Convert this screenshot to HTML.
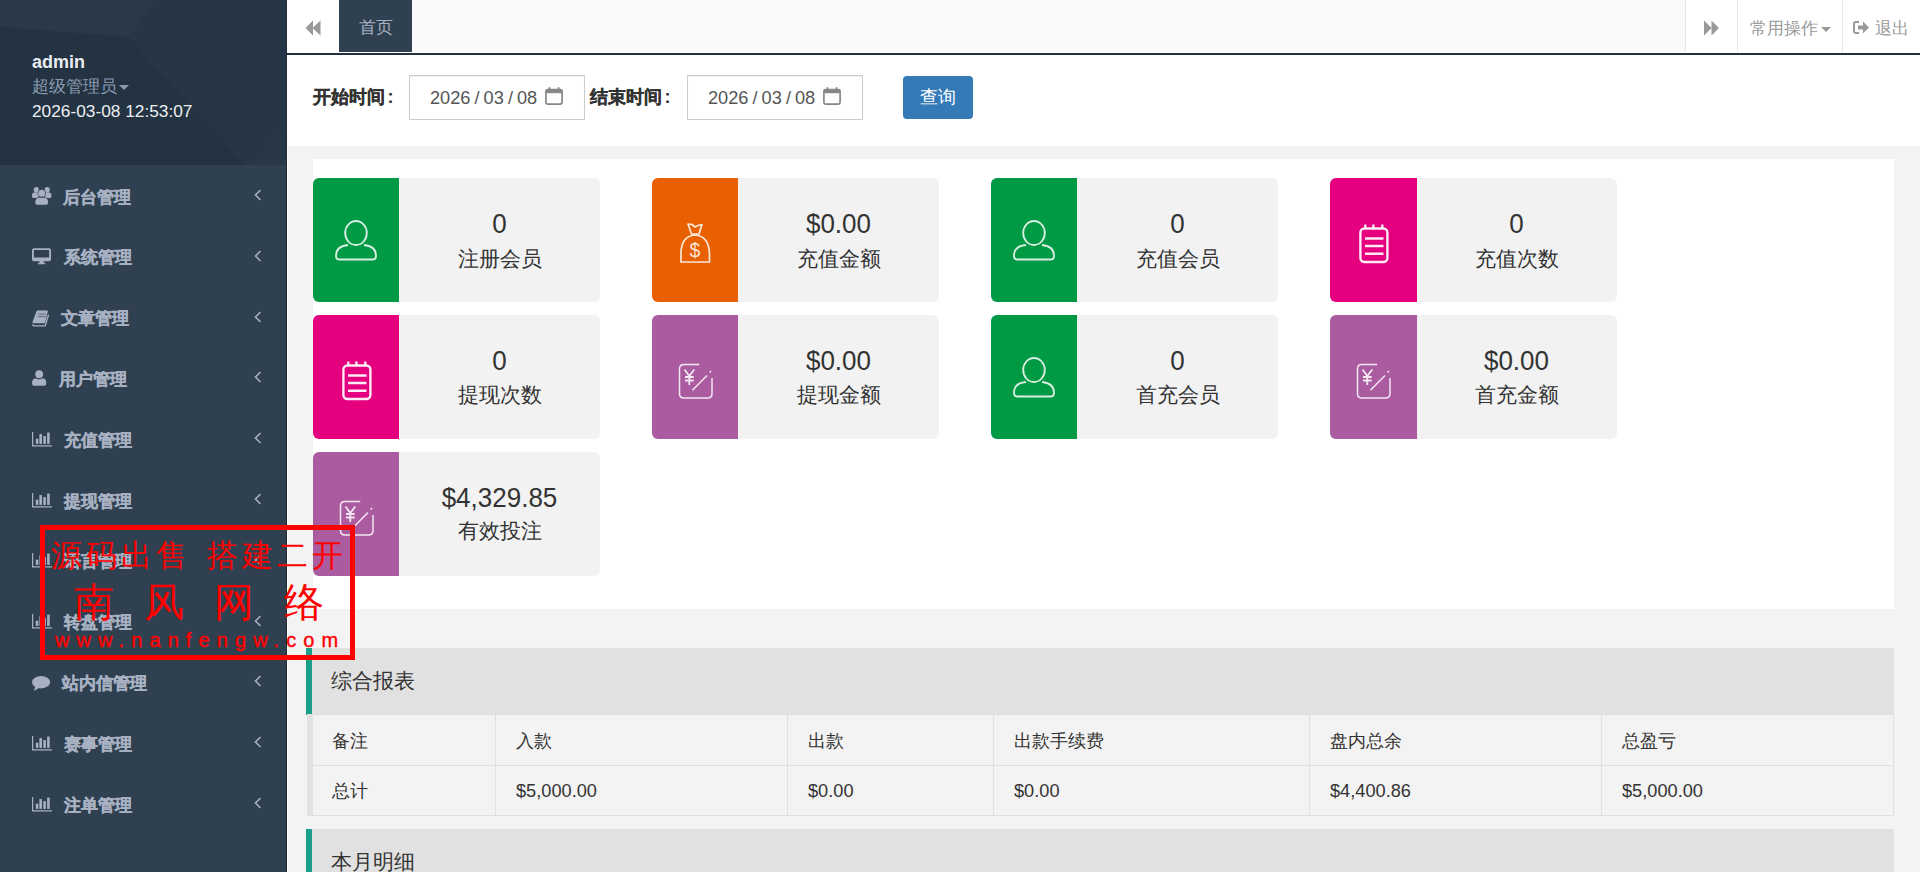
<!DOCTYPE html>
<html><head><meta charset="utf-8">
<style>
*{box-sizing:border-box;margin:0;padding:0}
html,body{width:1920px;height:872px;overflow:hidden;background:#f3f3f3;font-family:"Liberation Sans",sans-serif;color:#333}
.abs{position:absolute}
#side{position:absolute;left:0;top:0;width:287px;height:872px;background:#2f4050;border-right:1px solid #1f2d3b}
#shead{position:absolute;left:0;top:0;width:286px;height:165px;background:#273646;overflow:hidden}
.mi{position:absolute;left:0;width:286px;height:61px;color:#a7b1c2;font-size:17px;font-weight:bold;-webkit-text-stroke:0.3px #a7b1c2}
.mi .t{position:absolute;top:1.5px;line-height:61px;white-space:nowrap}
.mi .ic{position:absolute;left:32px;line-height:0}
.mi .ch{position:absolute;left:254px;top:24px}
#whitecol{position:absolute;left:287px;top:0;width:1px;height:872px;background:#fff}
#tabs{position:absolute;left:288px;top:0;width:1632px;height:52px;background:#fafafa}
#tabline{position:absolute;left:287px;top:53px;width:1633px;height:2px;background:#22303f}
#filter{position:absolute;left:288px;top:52px;width:1632px;height:94px;background:#fff}
.lbl{position:absolute;top:85px;font-size:18.2px;font-weight:bold;color:#333;-webkit-text-stroke:0.3px #333;line-height:24px;white-space:nowrap}
.inp{position:absolute;top:75px;width:176px;height:45px;border:1px solid #ccc;background:#fff;box-shadow:inset 0 1px 1px rgba(0,0,0,.075)}
.inp .d{position:absolute;left:20px;top:10px;font-size:18.2px;color:#555;line-height:24px;white-space:nowrap;word-spacing:-1px}
.inp svg{position:absolute;left:135px;top:11px}
#btn{position:absolute;left:903px;top:76px;width:70px;height:43px;background:#337ab7;border-radius:4px;color:#fff;font-size:18.2px;text-align:center;line-height:43px}
#panel{position:absolute;left:313px;top:159px;width:1581px;height:450px;background:#fff}
.card{position:absolute;width:287px;height:124px;background:#f2f2f2;border-radius:6px;overflow:hidden}
.card .blk{position:absolute;left:0;top:0;width:86px;height:124px;line-height:0}
.card .num{position:absolute;left:86px;width:201px;top:31px;text-align:center;font-size:26px;line-height:30px;color:#333;white-space:nowrap;transform:scaleY(1.05);transform-origin:50% 70%}
.card .nm{position:absolute;left:86px;width:201px;top:65px;text-align:center;font-size:20.8px;line-height:30px;color:#333;white-space:nowrap}
.sec{position:absolute;left:306px;width:1588px;height:66.5px;background:#e1e1e1;border-left:6px solid #1a9f8b}
.sec span{position:absolute;left:19px;top:0;line-height:66px;font-size:20.8px;color:#333;white-space:nowrap}
#tblb{position:absolute;left:307px;top:714px;width:6px;height:102px;background:#e1e1e1}
#tbl{position:absolute;left:312px;top:714px;width:1582px;height:102px;border-right:1px solid #e0e0e0}
.rowl{position:absolute;left:313px;width:1581px;height:1px;background:#e0e0e0}
.cell{position:absolute;height:51px;line-height:53px;font-size:18.2px;color:#333;padding-left:21px;border-right:1px solid #e0e0e0;white-space:nowrap}
.tb{position:absolute;top:3px;height:52px;color:#999;font-size:17px;line-height:52px;text-align:center;white-space:nowrap}
</style></head><body>
<div id="side">
 <div id="shead">
  <svg class="abs" style="left:0;top:0" width="286" height="165">
   <polygon points="0,0 156,0 128,37 0,27" fill="#2a3949"/>
   <polygon points="0,27 128,37 245,165 0,165" fill="#243342"/>
   <polygon points="250,165 286,128 286,165" fill="#293848"/>
  </svg>
  <div class="abs" style="left:32px;top:50px;font-size:18px;font-weight:bold;color:#e9ecf0;line-height:24px">admin</div>
  <div class="abs" style="left:32px;top:75px;font-size:17px;color:#8a9bb0;line-height:24px;white-space:nowrap">超级管理员<span style="display:inline-block;width:0;height:0;border-left:5px solid transparent;border-right:5px solid transparent;border-top:5px solid #8a9bb0;vertical-align:middle;margin-left:2px"></span></div>
  <div class="abs" style="left:32px;top:99px;font-size:17.3px;color:#eceff2;line-height:24px;white-space:nowrap">2026-03-08 12:53:07</div>
 </div>
<div class="mi" style="top:165.0px"><div class="ic" style="top:22.0px"><svg width="20" height="18" viewBox="0 0 20 18"><circle cx="4.3" cy="2.7" r="2.6" fill="#a7b1c2"/><circle cx="15.2" cy="2.7" r="2.6" fill="#a7b1c2"/><path d="M0 8.3 Q0 5.3 3.2 5.3 L5.6 5.3 Q7 5.3 7 7 L7 10.3 Q7 11 6 11 L1.3 11 Q0 11 0 9.8Z" fill="#a7b1c2"/><path d="M19.4 8.3 Q19.4 5.3 16.2 5.3 L13.8 5.3 Q12.4 5.3 12.4 7 L12.4 10.3 Q12.4 11 13.4 11 L18.1 11 Q19.4 11 19.4 9.8Z" fill="#a7b1c2" /><circle cx="9.7" cy="6.3" r="4.1" fill="#2f4050"/><circle cx="9.7" cy="6.3" r="3.5" fill="#a7b1c2"/><path d="M2.6 16 Q2.6 10 7 10 L12.4 10 Q16.8 10 16.8 16 Q16.8 18 14.8 18 L4.6 18 Q2.6 18 2.6 16Z" fill="#2f4050"/><path d="M3.3 15.8 Q3.3 10.7 7.2 10.7 L12.2 10.7 Q16.1 10.7 16.1 15.8 Q16.1 17.8 14.3 17.8 L5.1 17.8 Q3.3 17.8 3.3 15.8Z" fill="#a7b1c2"/></svg></div><div class="t" style="left:63px">后台管理</div><svg class="ch" width="8" height="12" viewBox="0 0 8 12"><path d="M6.5 1 L1.5 6 L6.5 11" fill="none" stroke="#a7b1c2" stroke-width="1.6"/></svg></div>
<div class="mi" style="top:225.8px"><div class="ic" style="top:22.4px"><svg width="20" height="17" viewBox="0 0 20 17"><path d="M2 0.2 L17 0.2 Q19 0.2 19 2.2 L19 11.2 Q19 13.2 17 13.2 L2 13.2 Q0 13.2 0 11.2 L0 2.2 Q0 0.2 2 0.2Z M1.9 1.9 L1.9 9.4 L17.1 9.4 L17.1 1.9Z" fill="#a7b1c2" fill-rule="evenodd"/><rect x="7.6" y="13" width="4" height="2.2" fill="#a7b1c2"/><rect x="6" y="14.8" width="7.2" height="1.4" rx="0.5" fill="#a7b1c2"/></svg></div><div class="t" style="left:64px">系统管理</div><svg class="ch" width="8" height="12" viewBox="0 0 8 12"><path d="M6.5 1 L1.5 6 L6.5 11" fill="none" stroke="#a7b1c2" stroke-width="1.6"/></svg></div>
<div class="mi" style="top:286.6px"><div class="ic" style="top:23.7px"><svg width="18" height="17" viewBox="0 0 18 17"><path d="M4.5 1.3 Q4.8 0.4 5.8 0.4 L15 0.4 Q16.2 0.4 15.8 1.6 L13 13.2 L1.6 13.2 Q0.2 13.2 0.5 12 Z" fill="#a7b1c2"/><path d="M16.6 4.8 L13.2 15.8 L2.2 15.8 Q0.6 15.8 0.6 14.2" fill="none" stroke="#a7b1c2" stroke-width="1.3"/><path d="M6.3 4.1 L14.2 4.1 M5.8 6.6 L13.6 6.6" stroke="#2f4050" stroke-width="0.9" opacity="0.7"/></svg></div><div class="t" style="left:61px">文章管理</div><svg class="ch" width="8" height="12" viewBox="0 0 8 12"><path d="M6.5 1 L1.5 6 L6.5 11" fill="none" stroke="#a7b1c2" stroke-width="1.6"/></svg></div>
<div class="mi" style="top:347.4px"><div class="ic" style="top:22.8px"><svg width="15" height="16" viewBox="0 0 15 16"><circle cx="7.2" cy="4.2" r="3.9" fill="#a7b1c2"/><path d="M0 13.3 Q0 8.8 3.5 8.3 Q7.2 10.2 10.9 8.3 Q14.3 8.8 14.3 13.3 Q14.3 15.8 12 15.8 L2.3 15.8 Q0 15.8 0 13.3Z" fill="#a7b1c2"/></svg></div><div class="t" style="left:59px">用户管理</div><svg class="ch" width="8" height="12" viewBox="0 0 8 12"><path d="M6.5 1 L1.5 6 L6.5 11" fill="none" stroke="#a7b1c2" stroke-width="1.6"/></svg></div>
<div class="mi" style="top:408.2px"><div class="ic" style="top:23.7px"><svg width="21" height="15" viewBox="0 0 21 15"><path d="M0.6 0 L0.6 13.9 L20 13.9" fill="none" stroke="#a7b1c2" stroke-width="1.25"/><rect x="3.8" y="6.7" width="2.6" height="5.2" fill="#a7b1c2"/><rect x="7.4" y="2.1" width="2.6" height="9.8" fill="#a7b1c2"/><rect x="11.3" y="4.1" width="2.6" height="7.8" fill="#a7b1c2"/><rect x="15.1" y="0.6" width="2.6" height="11.3" fill="#a7b1c2"/></svg></div><div class="t" style="left:64px">充值管理</div><svg class="ch" width="8" height="12" viewBox="0 0 8 12"><path d="M6.5 1 L1.5 6 L6.5 11" fill="none" stroke="#a7b1c2" stroke-width="1.6"/></svg></div>
<div class="mi" style="top:469.0px"><div class="ic" style="top:23.7px"><svg width="21" height="15" viewBox="0 0 21 15"><path d="M0.6 0 L0.6 13.9 L20 13.9" fill="none" stroke="#a7b1c2" stroke-width="1.25"/><rect x="3.8" y="6.7" width="2.6" height="5.2" fill="#a7b1c2"/><rect x="7.4" y="2.1" width="2.6" height="9.8" fill="#a7b1c2"/><rect x="11.3" y="4.1" width="2.6" height="7.8" fill="#a7b1c2"/><rect x="15.1" y="0.6" width="2.6" height="11.3" fill="#a7b1c2"/></svg></div><div class="t" style="left:64px">提现管理</div><svg class="ch" width="8" height="12" viewBox="0 0 8 12"><path d="M6.5 1 L1.5 6 L6.5 11" fill="none" stroke="#a7b1c2" stroke-width="1.6"/></svg></div>
<div class="mi" style="top:529.8px"><div class="ic" style="top:23.7px"><svg width="21" height="15" viewBox="0 0 21 15"><path d="M0.6 0 L0.6 13.9 L20 13.9" fill="none" stroke="#a7b1c2" stroke-width="1.25"/><rect x="3.8" y="6.7" width="2.6" height="5.2" fill="#a7b1c2"/><rect x="7.4" y="2.1" width="2.6" height="9.8" fill="#a7b1c2"/><rect x="11.3" y="4.1" width="2.6" height="7.8" fill="#a7b1c2"/><rect x="15.1" y="0.6" width="2.6" height="11.3" fill="#a7b1c2"/></svg></div><div class="t" style="left:64px">语言管理</div><svg class="ch" width="8" height="12" viewBox="0 0 8 12"><path d="M6.5 1 L1.5 6 L6.5 11" fill="none" stroke="#a7b1c2" stroke-width="1.6"/></svg></div>
<div class="mi" style="top:590.6px"><div class="ic" style="top:23.7px"><svg width="21" height="15" viewBox="0 0 21 15"><path d="M0.6 0 L0.6 13.9 L20 13.9" fill="none" stroke="#a7b1c2" stroke-width="1.25"/><rect x="3.8" y="6.7" width="2.6" height="5.2" fill="#a7b1c2"/><rect x="7.4" y="2.1" width="2.6" height="9.8" fill="#a7b1c2"/><rect x="11.3" y="4.1" width="2.6" height="7.8" fill="#a7b1c2"/><rect x="15.1" y="0.6" width="2.6" height="11.3" fill="#a7b1c2"/></svg></div><div class="t" style="left:64px">转盘管理</div><svg class="ch" width="8" height="12" viewBox="0 0 8 12"><path d="M6.5 1 L1.5 6 L6.5 11" fill="none" stroke="#a7b1c2" stroke-width="1.6"/></svg></div>
<div class="mi" style="top:651.4px"><div class="ic" style="top:24.2px"><svg width="19" height="16" viewBox="0 0 19 16"><ellipse cx="9.1" cy="6.2" rx="9" ry="6.2" fill="#a7b1c2"/><path d="M3.5 10 L1.8 15 L8 11.5Z" fill="#a7b1c2"/></svg></div><div class="t" style="left:62px">站内信管理</div><svg class="ch" width="8" height="12" viewBox="0 0 8 12"><path d="M6.5 1 L1.5 6 L6.5 11" fill="none" stroke="#a7b1c2" stroke-width="1.6"/></svg></div>
<div class="mi" style="top:712.2px"><div class="ic" style="top:23.7px"><svg width="21" height="15" viewBox="0 0 21 15"><path d="M0.6 0 L0.6 13.9 L20 13.9" fill="none" stroke="#a7b1c2" stroke-width="1.25"/><rect x="3.8" y="6.7" width="2.6" height="5.2" fill="#a7b1c2"/><rect x="7.4" y="2.1" width="2.6" height="9.8" fill="#a7b1c2"/><rect x="11.3" y="4.1" width="2.6" height="7.8" fill="#a7b1c2"/><rect x="15.1" y="0.6" width="2.6" height="11.3" fill="#a7b1c2"/></svg></div><div class="t" style="left:64px">赛事管理</div><svg class="ch" width="8" height="12" viewBox="0 0 8 12"><path d="M6.5 1 L1.5 6 L6.5 11" fill="none" stroke="#a7b1c2" stroke-width="1.6"/></svg></div>
<div class="mi" style="top:773.0px"><div class="ic" style="top:23.7px"><svg width="21" height="15" viewBox="0 0 21 15"><path d="M0.6 0 L0.6 13.9 L20 13.9" fill="none" stroke="#a7b1c2" stroke-width="1.25"/><rect x="3.8" y="6.7" width="2.6" height="5.2" fill="#a7b1c2"/><rect x="7.4" y="2.1" width="2.6" height="9.8" fill="#a7b1c2"/><rect x="11.3" y="4.1" width="2.6" height="7.8" fill="#a7b1c2"/><rect x="15.1" y="0.6" width="2.6" height="11.3" fill="#a7b1c2"/></svg></div><div class="t" style="left:64px">注单管理</div><svg class="ch" width="8" height="12" viewBox="0 0 8 12"><path d="M6.5 1 L1.5 6 L6.5 11" fill="none" stroke="#a7b1c2" stroke-width="1.6"/></svg></div>
</div>
<div id="whitecol"></div>
<div id="tabs"></div>
<div class="abs" style="left:288px;top:0;width:51px;height:52px;background:#fff"></div>
<svg class="abs" style="left:305px;top:20px" width="17" height="16" viewBox="0 0 17 16"><path d="M0.5 8 L8 0.5 L8 15.5Z M7.5 8 L15.5 0.5 L15.5 15.5Z" fill="#999"/></svg>
<div class="abs" style="left:339px;top:0;width:73px;height:52px;background:#2f4050;color:#a7b1c2;font-size:17px;line-height:55px;text-align:center">首页</div>
<div class="abs" style="left:1685px;top:0;width:235px;height:52px;background:#fff"></div>
<div class="abs" style="left:1685px;top:0;width:1px;height:52px;background:#e7e7e7"></div>
<div class="abs" style="left:1737px;top:0;width:1px;height:52px;background:#e7e7e7"></div>
<div class="abs" style="left:1842px;top:0;width:1px;height:52px;background:#e7e7e7"></div>
<svg class="abs" style="left:1703px;top:20px" width="17" height="16" viewBox="0 0 17 16"><path d="M1 0.5 L8.5 8 L1 15.5Z M8.5 0.5 L16 8 L8.5 15.5Z" fill="#999"/></svg>
<div class="tb" style="left:1738px;width:104px">常用操作<span style="display:inline-block;width:0;height:0;border-left:5px solid transparent;border-right:5px solid transparent;border-top:5px solid #999;vertical-align:middle;margin-left:3px"></span></div>
<svg class="abs" style="left:1853px;top:20px" width="17" height="15" viewBox="0 0 17 15"><path d="M6 2 L3 2 Q1 2 1 4 L1 11 Q1 13 3 13 L6 13" fill="none" stroke="#999" stroke-width="2"/><path d="M5 5.5 L10 5.5 L10 1.5 L16 7.5 L10 13.5 L10 9.5 L5 9.5Z" fill="#999"/></svg>
<div class="abs" style="left:1875px;top:3px;height:52px;color:#999;font-size:17px;line-height:52px">退出</div>
<div id="filter"></div>
<div id="tabline"></div>
<div class="lbl" style="left:313px">开始时间<span style="margin-left:2.5px;-webkit-text-stroke:0">:</span></div>
<div class="inp" style="left:409px"><div class="d">2026 / 03 / 08</div><svg width="18" height="18" viewBox="0 0 18 18"><rect x="0.9" y="2.6" width="16.2" height="14.5" rx="2" fill="none" stroke="#888" stroke-width="1.7"/><rect x="0.9" y="2.6" width="16.2" height="3.6" fill="#888"/><rect x="3.6" y="0.2" width="1.8" height="3" fill="#888"/><rect x="12.6" y="0.2" width="1.8" height="3" fill="#888"/></svg></div>
<div class="lbl" style="left:590px">结束时间<span style="margin-left:2.5px;-webkit-text-stroke:0">:</span></div>
<div class="inp" style="left:687px"><div class="d">2026 / 03 / 08</div><svg width="18" height="18" viewBox="0 0 18 18"><rect x="0.9" y="2.6" width="16.2" height="14.5" rx="2" fill="none" stroke="#888" stroke-width="1.7"/><rect x="0.9" y="2.6" width="16.2" height="3.6" fill="#888"/><rect x="3.6" y="0.2" width="1.8" height="3" fill="#888"/><rect x="12.6" y="0.2" width="1.8" height="3" fill="#888"/></svg></div>
<div id="btn">查询</div>
<div id="panel"></div>
<div class="card" style="left:313px;top:178px"><div class="blk" style="background:#009944;width:86px"><svg width="86" height="124" viewBox="0 0 86 124"><ellipse cx="43" cy="55" rx="10.8" ry="12" fill="none" stroke="rgba(255,255,255,.85)" stroke-width="1.8"/><path d="M35 67 Q23 68 23 78 Q23 81.5 26 81.5 L60 81.5 Q63 81.5 63 78 Q63 68 51 67" fill="none" stroke="rgba(255,255,255,.85)" stroke-width="1.8"/></svg></div><div class="num">0</div><div class="nm" style="top:66px">注册会员</div></div>
<div class="card" style="left:652px;top:178px"><div class="blk" style="background:#e96000;width:86px"><svg width="86" height="124" viewBox="0 0 86 124"><path d="M36 46 L39.5 56 L47 56 L50 46.5 L46 47.5 L43 49 L40 46.5 Z" fill="none" stroke="rgba(255,255,255,.85)" stroke-width="1.7" stroke-linejoin="round"/><path d="M29 84 L29 76 Q29 58 43 57 Q57 58 57.5 76 L57.5 84 Z" fill="none" stroke="rgba(255,255,255,.85)" stroke-width="1.7" stroke-linejoin="round"/><text x="43" y="78.5" text-anchor="middle" font-family="Liberation Sans" font-size="19.5" fill="rgba(255,255,255,.85)">$</text></svg></div><div class="num">$0.00</div><div class="nm" style="top:66px">充值金额</div></div>
<div class="card" style="left:991px;top:178px"><div class="blk" style="background:#009944;width:86px"><svg width="86" height="124" viewBox="0 0 86 124"><ellipse cx="43" cy="55" rx="10.8" ry="12" fill="none" stroke="rgba(255,255,255,.85)" stroke-width="1.8"/><path d="M35 67 Q23 68 23 78 Q23 81.5 26 81.5 L60 81.5 Q63 81.5 63 78 Q63 68 51 67" fill="none" stroke="rgba(255,255,255,.85)" stroke-width="1.8"/></svg></div><div class="num">0</div><div class="nm" style="top:66px">充值会员</div></div>
<div class="card" style="left:1330px;top:178px"><div class="blk" style="background:#e4007f;width:87px"><svg width="86" height="124" viewBox="0 0 86 124"><rect x="30.4" y="50.5" width="27" height="33.5" rx="4" fill="none" stroke="#fff" stroke-opacity=".92" stroke-width="2.4"/><path d="M35.3 46.5 L35.3 51 M43.4 46.5 L43.4 51 M52.3 46.5 L52.3 51" stroke="#fff" stroke-opacity=".92" stroke-width="2.3"/><path d="M35 60.5 L53.5 60.5 M35 68 L53.5 68 M35 75.7 L53.5 75.7" stroke="#fff" stroke-opacity=".92" stroke-width="2.4"/></svg></div><div class="num">0</div><div class="nm" style="top:66px">充值次数</div></div>
<div class="card" style="left:313px;top:315px"><div class="blk" style="background:#e4007f;width:86px"><svg width="86" height="124" viewBox="0 0 86 124"><rect x="30.4" y="50.5" width="27" height="33.5" rx="4" fill="none" stroke="#fff" stroke-opacity=".92" stroke-width="2.4"/><path d="M35.3 46.5 L35.3 51 M43.4 46.5 L43.4 51 M52.3 46.5 L52.3 51" stroke="#fff" stroke-opacity=".92" stroke-width="2.3"/><path d="M35 60.5 L53.5 60.5 M35 68 L53.5 68 M35 75.7 L53.5 75.7" stroke="#fff" stroke-opacity=".92" stroke-width="2.4"/></svg></div><div class="num">0</div><div class="nm" style="top:65px">提现次数</div></div>
<div class="card" style="left:652px;top:315px"><div class="blk" style="background:#ab5ca0;width:86px"><svg width="86" height="124" viewBox="0 0 86 124"><path d="M47.2 49.5 L32 49.5 Q27.5 49.5 27.5 54 L27.5 78.5 Q27.5 83 32 83 L55.5 83 Q60 83 60 78.5 L60 63" fill="none" stroke="rgba(255,255,255,.85)" stroke-width="1.5"/><circle cx="58.3" cy="56.7" r="1" fill="rgba(255,255,255,.85)"/><path d="M40.4 75.2 L55 60.5" stroke="rgba(255,255,255,.85)" stroke-width="1.5"/><path d="M32.5 54.5 L37.3 61 L42.3 54.5 M37.3 61 L37.3 70 M33 62 L41.7 62 M33 65.5 L41.7 65.5" fill="none" stroke="rgba(255,255,255,.85)" stroke-width="1.8"/></svg></div><div class="num">$0.00</div><div class="nm" style="top:65px">提现金额</div></div>
<div class="card" style="left:991px;top:315px"><div class="blk" style="background:#009944;width:86px"><svg width="86" height="124" viewBox="0 0 86 124"><ellipse cx="43" cy="55" rx="10.8" ry="12" fill="none" stroke="rgba(255,255,255,.85)" stroke-width="1.8"/><path d="M35 67 Q23 68 23 78 Q23 81.5 26 81.5 L60 81.5 Q63 81.5 63 78 Q63 68 51 67" fill="none" stroke="rgba(255,255,255,.85)" stroke-width="1.8"/></svg></div><div class="num">0</div><div class="nm" style="top:65px">首充会员</div></div>
<div class="card" style="left:1330px;top:315px"><div class="blk" style="background:#ab5ca0;width:87px"><svg width="86" height="124" viewBox="0 0 86 124"><path d="M47.2 49.5 L32 49.5 Q27.5 49.5 27.5 54 L27.5 78.5 Q27.5 83 32 83 L55.5 83 Q60 83 60 78.5 L60 63" fill="none" stroke="rgba(255,255,255,.85)" stroke-width="1.5"/><circle cx="58.3" cy="56.7" r="1" fill="rgba(255,255,255,.85)"/><path d="M40.4 75.2 L55 60.5" stroke="rgba(255,255,255,.85)" stroke-width="1.5"/><path d="M32.5 54.5 L37.3 61 L42.3 54.5 M37.3 61 L37.3 70 M33 62 L41.7 62 M33 65.5 L41.7 65.5" fill="none" stroke="rgba(255,255,255,.85)" stroke-width="1.8"/></svg></div><div class="num">$0.00</div><div class="nm" style="top:65px">首充金额</div></div>
<div class="card" style="left:313px;top:452px"><div class="blk" style="background:#ab5ca0;width:86px"><svg width="86" height="124" viewBox="0 0 86 124"><path d="M47.2 49.5 L32 49.5 Q27.5 49.5 27.5 54 L27.5 78.5 Q27.5 83 32 83 L55.5 83 Q60 83 60 78.5 L60 63" fill="none" stroke="rgba(255,255,255,.85)" stroke-width="1.5"/><circle cx="58.3" cy="56.7" r="1" fill="rgba(255,255,255,.85)"/><path d="M40.4 75.2 L55 60.5" stroke="rgba(255,255,255,.85)" stroke-width="1.5"/><path d="M32.5 54.5 L37.3 61 L42.3 54.5 M37.3 61 L37.3 70 M33 62 L41.7 62 M33 65.5 L41.7 65.5" fill="none" stroke="rgba(255,255,255,.85)" stroke-width="1.8"/></svg></div><div class="num">$4,329.85</div><div class="nm" style="top:64px">有效投注</div></div>
<div class="sec" style="top:648px"><span>综合报表</span></div>
<div id="tblb"></div>
<div class="cell" style="left:313px;top:714px;width:183px;line-height:55px;padding-left:19px">备注</div><div class="cell" style="left:495px;top:714px;width:293px;line-height:55px">入款</div><div class="cell" style="left:787px;top:714px;width:207px;line-height:55px">出款</div><div class="cell" style="left:993px;top:714px;width:317px;line-height:55px">出款手续费</div><div class="cell" style="left:1309px;top:714px;width:293px;line-height:55px">盘内总余</div><div class="cell" style="left:1601px;top:714px;width:293px;line-height:55px">总盈亏</div>
<div class="cell" style="left:313px;top:765px;width:183px;padding-left:19px">总计</div><div class="cell" style="left:495px;top:765px;width:293px">$5,000.00</div><div class="cell" style="left:787px;top:765px;width:207px">$0.00</div><div class="cell" style="left:993px;top:765px;width:317px">$0.00</div><div class="cell" style="left:1309px;top:765px;width:293px">$4,400.86</div><div class="cell" style="left:1601px;top:765px;width:293px">$5,000.00</div>
<div class="rowl" style="top:765px"></div>
<div class="rowl" style="top:815px"></div>
<div class="sec" style="top:829px"><span>本月明细</span></div>
<div class="abs" style="left:40px;top:525px;width:315px;height:135px;border:5px solid #ff0000"></div>
<div class="abs" style="left:51px;top:535.5px;font-family:'Liberation Serif',serif;font-weight:300;font-size:31px;line-height:40px;color:#ff0000;white-space:nowrap;letter-spacing:4px">源码出售<span style="margin-left:16px">搭建二开</span></div>
<div class="abs" style="left:74px;top:579px;font-family:'Liberation Serif',serif;font-weight:300;font-size:40px;line-height:48px;color:#ff0000;white-space:nowrap;letter-spacing:30px">南风网络</div>
<div class="abs" style="left:55px;top:626.5px;font-size:20px;line-height:26px;color:#ff0000;white-space:nowrap;letter-spacing:7.1px;-webkit-text-stroke:0.4px #ff0000">www.nanfengw.com</div>
</body></html>
